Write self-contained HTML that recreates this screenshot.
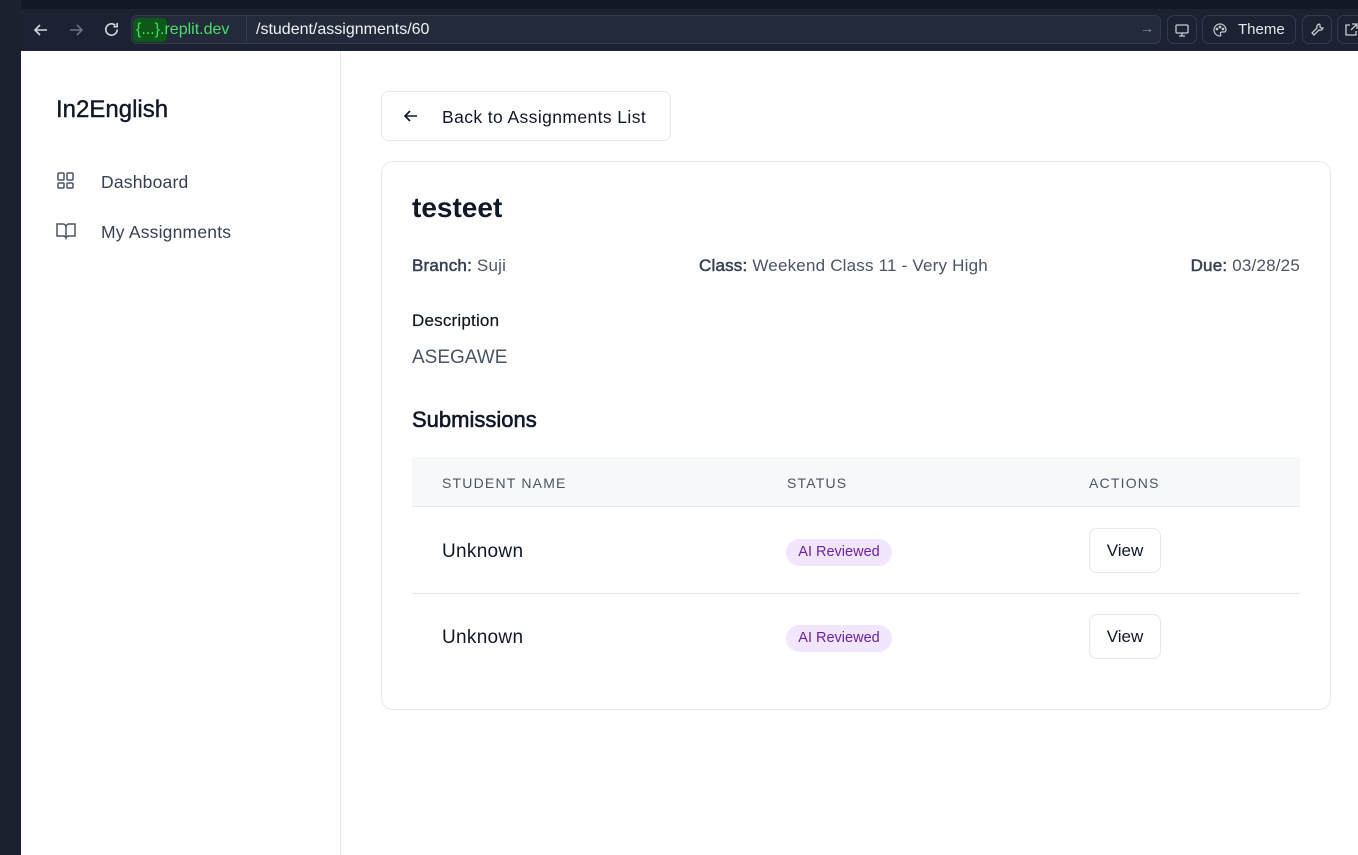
<!DOCTYPE html>
<html><head><meta charset="utf-8"><style>
*{box-sizing:border-box;margin:0;padding:0}
body{width:1358px;height:855px;overflow:hidden;background:#fff;font-family:"Liberation Sans",sans-serif;position:relative}
.left{position:absolute;left:0;top:0;width:21px;height:855px;background:#1c2130}
.top{position:absolute;left:0;top:0;width:1358px;height:51px;background:#1c2231}
.tabs{position:absolute;left:21px;top:0;right:0;height:9px;background:#141824}
.url{position:absolute;left:131px;top:15px;width:1030px;height:29px;border:1px solid #333a4b;border-radius:6px;background:#232a3a}
.btn{position:absolute;top:15px;height:29px;border:1px solid #333a4b;border-radius:7px}
.sidebar{position:absolute;left:21px;top:51px;width:320px;height:804px;border-right:1px solid #e5e7eb;background:#fff}
.t{position:absolute;white-space:nowrap}
</style></head><body>
<div class="top"></div><div class="tabs"></div><div class="left"></div>
<svg class="t" style="left:32px;top:21px" width="18" height="18" viewBox="0 0 18 18" fill="none" stroke="#d5d8de" stroke-width="1.6"><path d="M15 9H3M8 4L3 9l5 5"/></svg>
<svg class="t" style="left:67px;top:21px" width="18" height="18" viewBox="0 0 18 18" fill="none" stroke="#6b7280" stroke-width="1.6"><path d="M3 9h12M10 4l5 5-5 5"/></svg>
<svg class="t" style="left:102px;top:20px" width="19" height="19" viewBox="0 0 20 20" fill="none" stroke="#d5d8de" stroke-width="1.7"><path d="M16 10a6 6 0 1 1-2-4.5M16 3v4h-4"/></svg>
<div class="url"></div>
<div class="t" style="left:133px;top:18px;width:34px;height:24px;background:#0d5a18;border-radius:5px"></div>
<div class="t" style="left:136px;top:21px;font-size:16px;color:#4ade6a">{...}.replit.dev</div>
<div class="t" style="left:246px;top:16px;width:1px;height:28px;background:#333a4b"></div>
<div class="t" style="left:256px;top:21px;font-size:16px;color:#f1f2f4">/student/assignments/60</div>
<div class="t" style="left:1140px;top:20px;font-size:14px;color:#8a90a0">→</div>
<div class="btn" style="left:1167px;width:30px"></div>
<svg class="t" style="left:1174px;top:22px" width="16" height="16" viewBox="0 0 16 16" fill="none" stroke="#c8ccd4" stroke-width="1.3"><rect x="2" y="3" width="12" height="8" rx="1"/><path d="M8 11v3M5 14h6"/></svg>
<div class="btn" style="left:1202px;width:94px"></div>
<svg class="t" style="left:1212px;top:22px" width="16" height="16" viewBox="0 0 16 16" fill="none" stroke="#c8ccd4" stroke-width="1.2"><path d="M8 2a6 6 0 1 0 0 12c1 0 1-1 .5-2s0-2 1.5-2h2a2 2 0 0 0 2-2A6 6 0 0 0 8 2z"/><circle cx="5" cy="7" r=".8"/><circle cx="8" cy="5" r=".8"/><circle cx="11" cy="7" r=".8"/></svg>
<div class="t" style="left:1238px;top:21px;font-size:15px;color:#e5e7eb">Theme</div>
<div class="btn" style="left:1302px;width:30px"></div>
<svg class="t" style="left:1309px;top:22px" width="16" height="16" viewBox="0 0 16 16" fill="none" stroke="#c8ccd4" stroke-width="1.3"><path d="M10 2a3 3 0 0 0-2 4l-5 5 2 2 5-5a3 3 0 0 0 4-2l-2 0-1-1 0-2z"/></svg>
<div class="btn" style="left:1337px;width:40px"></div>
<svg class="t" style="left:1343px;top:22px" width="16" height="16" viewBox="0 0 16 16" fill="none" stroke="#c8ccd4" stroke-width="1.3"><path d="M7 3H3v10h10V9M9 2h5v5M14 2L8 8"/></svg>

<div class="sidebar"></div>
<div class="t" style="left:56px;top:96px;font-size:24px;color:#111827;-webkit-text-stroke:0.4px #111827">In2English</div>
<svg class="t" style="left:57px;top:172px" width="18" height="18" viewBox="0 0 18 18" fill="none" stroke="#4b5563" stroke-width="1.5"><rect x="1" y="1" width="6" height="7" rx="1"/><rect x="10" y="1" width="6" height="7" rx="1"/><rect x="10" y="11" width="6" height="5" rx="1"/><rect x="1" y="11" width="6" height="5" rx="1"/></svg>
<div class="t" style="left:101px;top:172px;font-size:17.5px;letter-spacing:0.2px;color:#374151">Dashboard</div>
<svg class="t" style="left:56px;top:222px" width="20" height="18" viewBox="0 0 20 18" fill="none" stroke="#4b5563" stroke-width="1.5"><path d="M10 4v12M1 2h6a3 3 0 0 1 3 3 3 3 0 0 1 3-3h6v12h-6a3 3 0 0 0-3 2 3 3 0 0 0-3-2H1z"/></svg>
<div class="t" style="left:101px;top:222px;font-size:17.5px;letter-spacing:0.2px;color:#374151">My Assignments</div>

<div class="t" style="left:381px;top:91px;width:290px;height:50px;border:1px solid #e5e7eb;border-radius:8px"></div>
<svg class="t" style="left:402px;top:107px" width="18" height="18" viewBox="0 0 18 18" fill="none" stroke="#111827" stroke-width="1.6"><path d="M15 9H3M8 4L3 9l5 5"/></svg>
<div class="t" style="left:442px;top:107px;font-size:17.5px;letter-spacing:0.4px;color:#111827">Back to Assignments List</div>

<div class="t" style="left:381px;top:161px;width:950px;height:549px;border:1px solid #e5e7eb;border-radius:12px"></div>
<div class="t" style="left:412px;top:192px;font-size:28px;font-weight:bold;color:#111827">testeet</div>
<div class="t" style="left:412px;top:256px;font-size:17px;letter-spacing:0.2px;color:#4b5563"><span style="color:#374151;-webkit-text-stroke:0.5px #374151">Branch:</span> Suji</div>
<div class="t" style="left:699px;top:256px;font-size:17px;letter-spacing:0.2px;color:#4b5563"><span style="color:#374151;-webkit-text-stroke:0.5px #374151">Class:</span> Weekend Class 11 - Very High</div>
<div class="t" style="right:58px;top:256px;font-size:17px;letter-spacing:0.2px;color:#4b5563"><span style="color:#374151;-webkit-text-stroke:0.5px #374151">Due:</span> 03/28/25</div>
<div class="t" style="left:412px;top:311px;font-size:17px;letter-spacing:0.2px;color:#111827;-webkit-text-stroke:0.2px #111827">Description</div>
<div class="t" style="left:412px;top:347px;font-size:19px;color:#4b5563">ASEGAWE</div>
<div class="t" style="left:412px;top:407px;font-size:22px;color:#111827;-webkit-text-stroke:0.6px #111827">Submissions</div>

<div class="t" style="left:412px;top:457px;width:888px;height:50px;background:#f7f8fa;border-bottom:1px solid #e5e7eb"></div>
<div class="t" style="left:442px;top:475px;font-size:14px;letter-spacing:1.2px;color:#4b5563">STUDENT NAME</div>
<div class="t" style="left:787px;top:475px;font-size:14px;letter-spacing:1.2px;color:#4b5563">STATUS</div>
<div class="t" style="left:1089px;top:475px;font-size:14px;letter-spacing:1.2px;color:#4b5563">ACTIONS</div>

<div class="t" style="left:442px;top:541px;font-size:19px;letter-spacing:0.3px;color:#111827">Unknown</div>
<div class="t" style="left:786px;top:539px;width:106px;height:27px;border-radius:14px;background:#f1e6fd;color:#6b21a8;font-size:14.5px;text-align:center;line-height:27px">AI Reviewed</div>
<div class="t" style="left:1089px;top:528px;width:72px;height:45px;border:1px solid #e5e7eb;border-radius:8px;font-size:17px;text-align:center;line-height:43px;color:#111827">View</div>
<div class="t" style="left:412px;top:593px;width:888px;height:1px;background:#e5e7eb"></div>
<div class="t" style="left:442px;top:627px;font-size:19px;letter-spacing:0.3px;color:#111827">Unknown</div>
<div class="t" style="left:786px;top:625px;width:106px;height:27px;border-radius:14px;background:#f1e6fd;color:#6b21a8;font-size:14.5px;text-align:center;line-height:27px">AI Reviewed</div>
<div class="t" style="left:1089px;top:614px;width:72px;height:45px;border:1px solid #e5e7eb;border-radius:8px;font-size:17px;text-align:center;line-height:43px;color:#111827">View</div>
</body></html>
